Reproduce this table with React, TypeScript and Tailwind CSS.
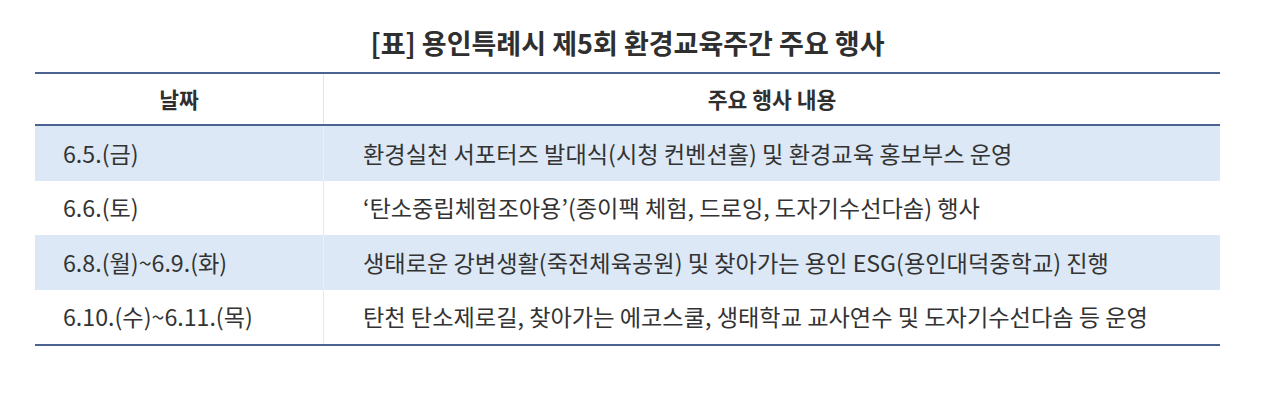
const rows: { date: string; desc: string }[] = [
  { date: "6.5.(금)", desc: "환경실천 서포터즈 발대식(시청 컨벤션홀) 및 환경교육 홍보부스 운영" },
  { date: "6.6.(토)", desc: "‘탄소중립체험조아용’(종이팩 체험, 드로잉, 도자기수선다솜) 행사" },
  { date: "6.8.(월)~6.9.(화)", desc: "생태로운 강변생활(죽전체육공원) 및 찾아가는 용인 ESG(용인대덕중학교) 진행" },
  { date: "6.10.(수)~6.11.(목)", desc: "탄천 탄소제로길, 찾아가는 에코스쿨, 생태학교 교사연수 및 도자기수선다솜 등 운영" },
];

export default function App() {
  return (
    <div className="w-[1280px] h-[411px] bg-white font-['Noto_Sans_CJK_KR',sans-serif] text-[#333333]">
      <div className="pl-[35px] pr-[60px] pt-[24px]">
        {/* Title */}
        <h1 className="h-[48px] text-center text-[27px] font-bold leading-[38px] text-[#2f2f2f]">
          [표] 용인특례시 제5회 환경교육주간 주요 행사
        </h1>

        {/* Table */}
        <div className="border-t-2 border-b-2 border-[#4b6390]">
          <div className="flex h-[52px] border-b-2 border-[#4b6390] text-[21.5px] font-bold text-[#2f2f2f]">
            <div className="w-[288px] flex items-center justify-center">날짜</div>
            <div className="flex-1 flex items-center justify-center border-l border-[#dfe4ec]">주요 행사 내용</div>
          </div>
          {rows.map((r, i) => (
            <div
              key={i}
              className={
                "flex h-[54.5px] text-[23.2px] " + (i % 2 === 0 ? "bg-[#dce8f5]" : "bg-white")
              }
            >
              <div className="w-[288px] flex items-center pl-[28px]">{r.date}</div>
              <div
                className={
                  "flex-1 flex items-center pl-[39px] border-l " +
                  (i % 2 === 0 ? "border-[#e8eff8]" : "border-[#e3e7ee]")
                }
              >
                {r.desc}
              </div>
            </div>
          ))}
        </div>
      </div>
    </div>
  );
}
